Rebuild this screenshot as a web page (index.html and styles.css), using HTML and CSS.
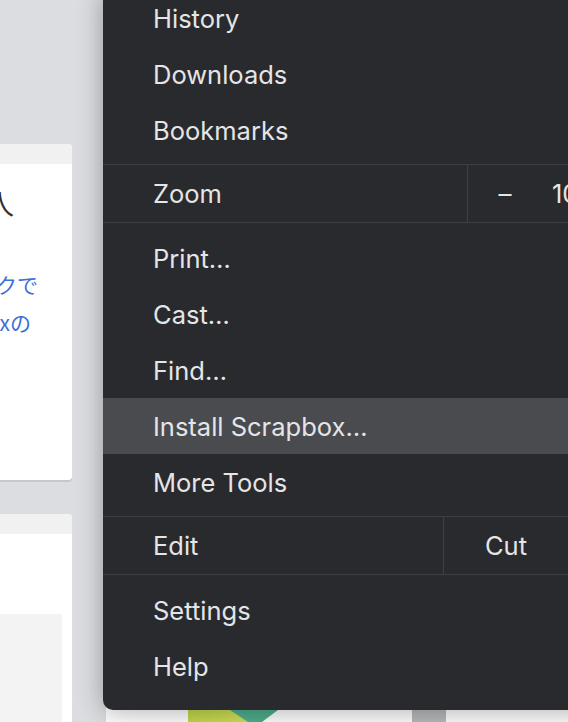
FILE: index.html
```html
<!DOCTYPE html>
<html lang="ja">
<head>
<meta charset="utf-8">
<title>Scrapbox</title>
<link rel="stylesheet" href="styles.css">
</head>
<body>
<div class="page">
  <div class="col-left">
    <div class="card card-a">
      <div class="card-head"></div>
      <div class="card-body">
        <div class="title">プロジェクトに参加する人</div>
        <p class="desc">
          <span class="l1">ページとページをリンクで</span>
          <span class="l2">つなげていくのがScrapboxの</span>
        </p>
      </div>
    </div>
    <div class="card card-b">
      <div class="card-head"></div>
      <div class="card-body">
        <div class="inset"></div>
      </div>
    </div>
  </div>
  <div class="col-main">
    <div class="card card-c">
      <div class="card-head"></div>
      <div class="card-body"></div>
    </div>
    <div class="card card-d">
      <div class="card-head"></div>
      <div class="thumbs">
        <svg class="thumb-green" width="90" height="40" viewBox="0 0 90 40">
          <defs>
            <linearGradient id="yg" x1="0" y1="0" x2="1" y2="0">
              <stop offset="0" stop-color="#c2d84a"/>
              <stop offset="1" stop-color="#d2e25c"/>
            </linearGradient>
          </defs>
          <rect x="0" y="0" width="70" height="40" fill="url(#yg)"/>
          <polygon points="42,0 90,0 74,12 74,40 60,40 60,12" fill="#4faf8b"/>
          <polygon points="60,12 74,12 74,40" fill="#5cbb94"/>
        </svg>
        <div class="thumb-gray"></div>
      </div>
    </div>
  </div>
</div>

<nav class="menu">
  <div class="group g1">
    <div class="mi">History</div>
    <div class="mi">Downloads</div>
    <div class="mi">Bookmarks</div>
  </div>
  <div class="sep"></div>
  <div class="row zoom-row">
    <div class="cell label zoom-label">Zoom</div>
    <div class="cell btn minus">–</div>
    <div class="cell value">100 %</div>
  </div>
  <div class="sep"></div>
  <div class="group g3">
    <div class="mi">Print…</div>
    <div class="mi">Cast…</div>
    <div class="mi">Find…</div>
    <div class="mi active">Install Scrapbox…</div>
    <div class="mi">More Tools</div>
  </div>
  <div class="sep"></div>
  <div class="row edit-row">
    <div class="cell label edit-label">Edit</div>
    <div class="cell btn cut">Cut</div>
    <div class="cell btn copy">Copy</div>
  </div>
  <div class="sep"></div>
  <div class="group g5">
    <div class="mi">Settings</div>
    <div class="mi">Help</div>
  </div>
</nav>
</body>
</html>
```

FILE: styles.css
```css
html, body {
  margin: 0;
  padding: 0;
}
body {
  width: 568px;
  height: 722px;
  overflow: hidden;
  position: relative;
  background: #dcdde0;
  font-family: "Noto Sans CJK JP", "Noto Sans", sans-serif;
}

.page {
  display: flex;
  gap: 34px;
  margin-left: -328px;
}

.col-left {
  width: 400px;
  flex: 0 0 400px;
  padding-top: 144px;
  display: flex;
  flex-direction: column;
  gap: 34px;
}

.col-main {
  flex: 0 0 500px;
  padding-top: 144px;
  display: flex;
  flex-direction: column;
  gap: 34px;
}

.card {
  background: #ffffff;
  border-radius: 4px;
  box-shadow: 0 2px 0 #c6c7ca;
  overflow: hidden;
}

.card-head {
  height: 20px;
  background: #f1f1f1;
}

.card-a {
  height: 336px;
}

.card-a .card-body {
  padding-top: 19px;
  text-align: right;
  white-space: nowrap;
}

.title {
  font-size: 28px;
  line-height: 40px;
  color: #2f3033;
  margin-right: 58px;
}

.desc {
  margin: 42px 0 0;
  font-size: 21px;
  line-height: 38px;
  color: #3b6fd9;
}

.desc span {
  display: block;
}

.desc .l1 { margin-right: 34px; }
.desc .l2 { margin-right: 41px; }

.card-b {
  height: 260px;
  box-shadow: none;
}

.card-b .card-body {
  padding-top: 80px;
}

.inset {
  height: 140px;
  margin-right: 10px;
  background: #f3f3f3;
}

.card-c {
  height: 336px;
}

.card-d {
  height: 260px;
  box-shadow: none;
}

.thumbs {
  display: flex;
  align-items: flex-start;
  padding-top: 176px;
  padding-left: 82px;
  gap: 134px;
}

.thumb-green {
  display: block;
  flex: 0 0 auto;
}

.thumb-gray {
  width: 34px;
  height: 40px;
  background: #b9babd;
}

/* Chrome menu overlay */
.menu {
  position: absolute;
  left: 103px;
  top: -10px;
  width: 520px;
  background: #292a2d;
  border-radius: 0 0 0 10px;
  box-shadow: 0 2px 26px rgba(0, 0, 0, 0.32);
  font-family: "Inter", "Noto Sans", sans-serif;
  font-size: 25.5px;
  color: #e4e5e7;
  white-space: nowrap;
  padding-bottom: 16px;
}

.group {
  display: flex;
  flex-direction: column;
}

.g1 { padding-bottom: 6px; }
.g3 { padding: 7px 0 6px; }
.g5 { padding-top: 7px; }

.mi {
  height: 56px;
  display: flex;
  align-items: center;
  padding-left: 50px;
}

.mi.active {
  background: #4a4b4f;
}

.sep {
  height: 1px;
  background: #3e3f43;
}

.row {
  display: flex;
  height: 57px;
}

.cell {
  display: flex;
  align-items: center;
  box-sizing: border-box;
}

.label {
  padding-left: 50px;
  border-right: 1px solid #3e3f43;
}

.zoom-label { flex: 0 0 365px; }
.edit-label { flex: 0 0 341px; }

.btn {
  justify-content: center;
}

.minus {
  flex: 0 0 74px;
  font-size: 26px;
}

.value {
  flex: 0 0 auto;
  padding-left: 10px;
}

.cut {
  flex: 0 0 125px;
  border-right: 1px solid #3e3f43;
}

.copy {
  flex: 0 0 120px;
}
```
